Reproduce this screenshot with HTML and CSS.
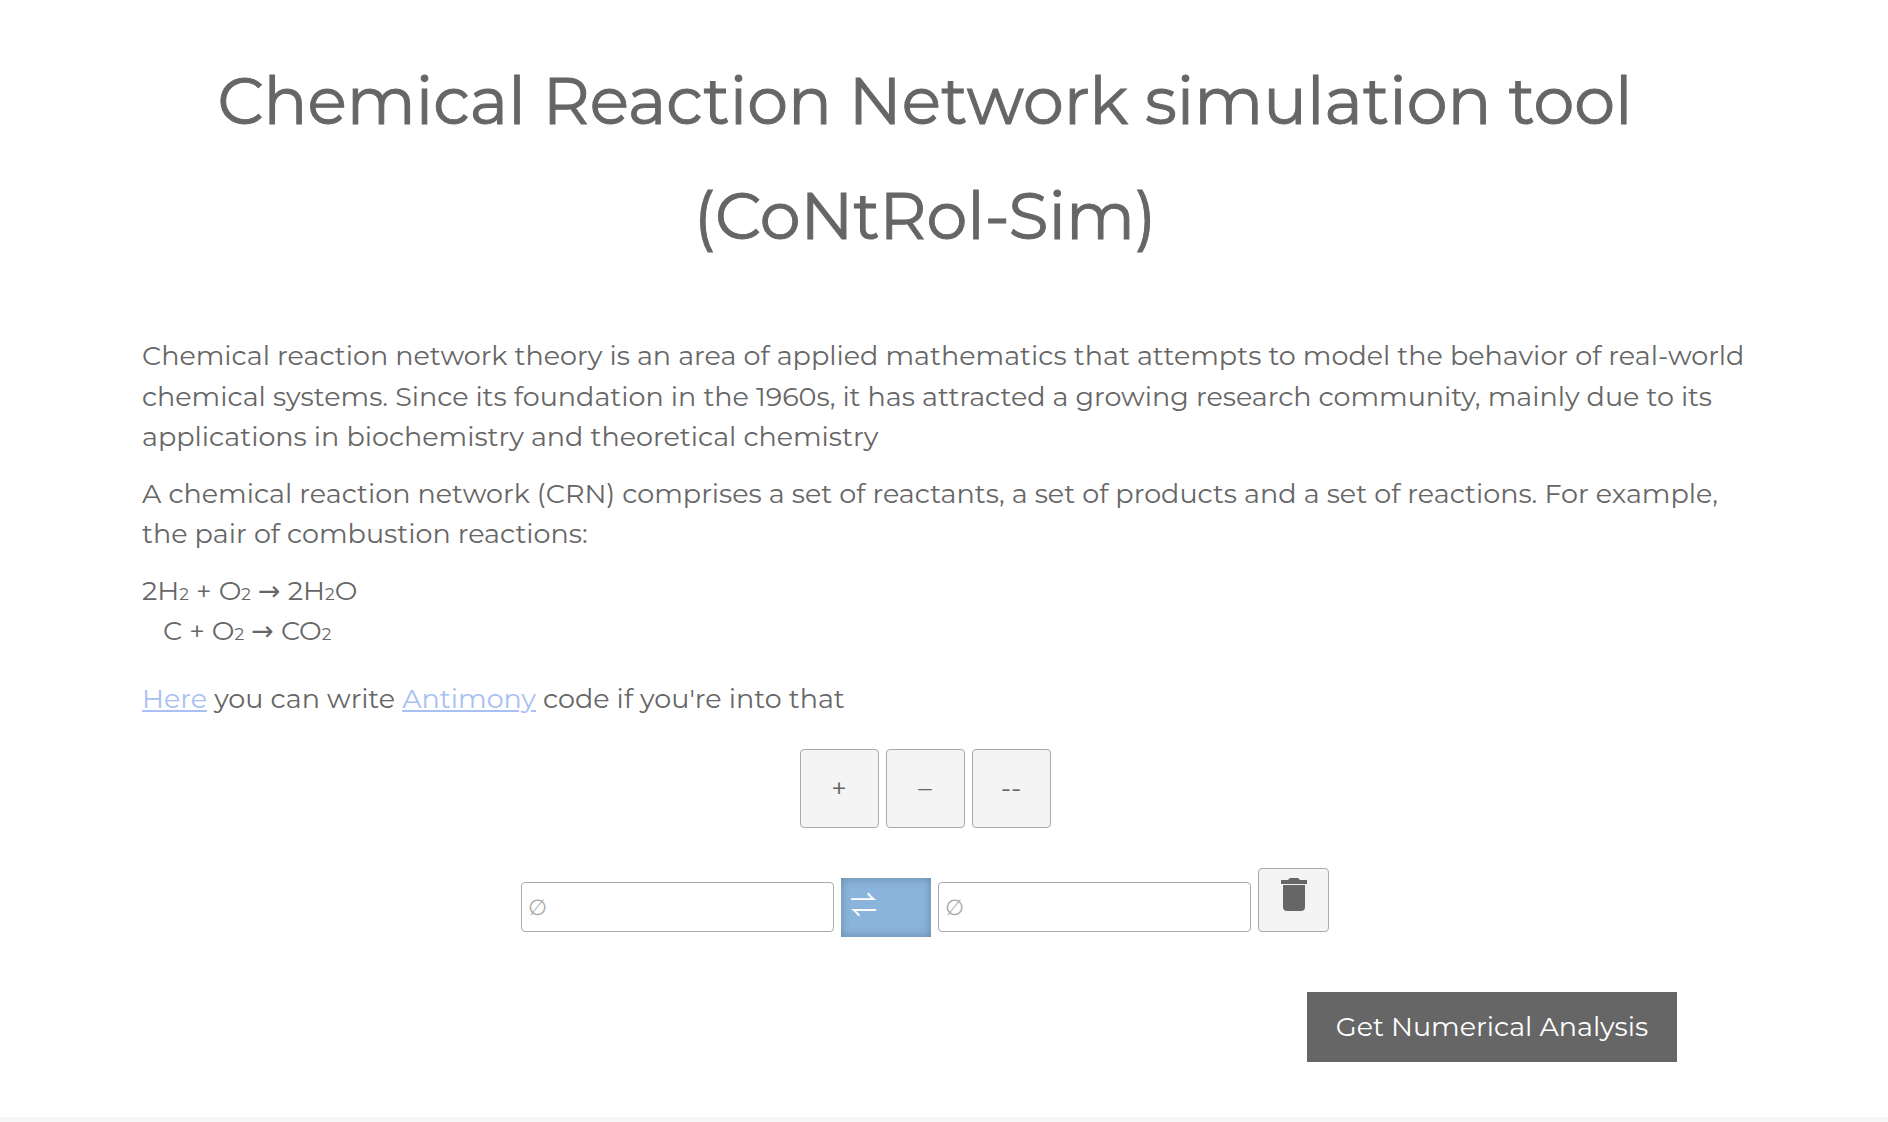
FILE: index.html
```html
<!DOCTYPE html>
<html lang="en">
<head>
<meta charset="utf-8">
<meta name="viewport" content="width=device-width, initial-scale=1">
<title>Chemical Reaction Network simulation tool</title>
<link rel="stylesheet" href="styles.css">
</head>
<body>
<main class="page">
  <h1 class="title">Chemical Reaction Network simulation tool<br>(CoNtRol-Sim)</h1>
  <section class="intro">
    <p>Chemical reaction network theory is an area of applied mathematics that attempts to model the behavior of real-world chemical systems. Since its foundation in the 1960s, it has attracted a growing research community, mainly due to its applications in biochemistry and theoretical chemistry</p>
    <p>A chemical reaction network (CRN) comprises a set of reactants, a set of products and a set of reactions. For example, the pair of combustion reactions:</p>
    <p class="equations">2H<sub>2</sub> + O<sub>2</sub> <span class="arrow">→</span> 2H<sub>2</sub>O<br><span class="indent">C + O<sub>2</sub> <span class="arrow">→</span> CO<sub>2</sub></span></p>
    <p><a href="#code">Here</a> you can write <a href="#antimony">Antimony</a> code if you're into that</p>
  </section>
  <div class="toolbar">
    <button class="tool" type="button" aria-label="Add reaction">+</button>
    <button class="tool" type="button" aria-label="Remove reaction">–</button>
    <button class="tool" type="button" aria-label="Remove all reactions">--</button>
  </div>
  <form class="network">
    <div class="reaction">
      <input class="species" type="text" placeholder="∅" aria-label="Reactants">
      <select class="direction" aria-label="Direction"><option>⇌</option><option>→</option><option>←</option></select>
      <input class="species" type="text" placeholder="∅" aria-label="Products">
      <button class="trash" type="button" aria-label="Delete reaction">
        <svg width="26" height="34" viewBox="0 0 26 34" aria-hidden="true"><path d="M0 2h7l2-2h8l2 2h7v4H0zM2 7h22v22q0 4-4 4H6q-4 0-4-4z" fill="currentColor"/></svg>
      </button>
    </div>
    <div class="actions"><button class="submit" type="button">Get Numerical Analysis</button></div>
  </form>
</main>
<footer class="footer"></footer>
</body>
</html>
```
FILE: styles.css
```css
* { box-sizing: border-box; }
body {
  margin: 0;
  background: #fff;
  color: #666;
  font: 27px/1.5 Montserrat, Inter, "DejaVu Sans", sans-serif;
}
.page { padding: 43px 38px 55px 0; }
.title {
  margin: 0 0 63px;
  font-size: 65px;
  line-height: 115px;
  font-weight: 400;
  text-align: center;
  -webkit-text-stroke: 1px #666;
}
.intro { padding: 0 96px 0 142px; }
.intro p { margin: 0 0 16px; }
.intro .equations { margin-bottom: 27px; }
.intro a { color: #a9c0f2; text-decoration-thickness: 2px; text-underline-offset: 2px; }
sub { font-size: 17px; line-height: 1; vertical-align: baseline; }
.arrow { font: 27px/1 "DejaVu Sans", sans-serif; }
.indent { padding-left: 21px; }
.toolbar { display: flex; justify-content: center; gap: 7px; margin-top: 30px; }
button, input, select { font: inherit; color: inherit; }
.tool, .trash {
  background: #f4f4f4;
  border: 1px solid #aaa;
  border-radius: 4px;
}
.tool { width: 79px; height: 79px; padding: 0 0 1px; }
.reaction { display: flex; justify-content: center; align-items: flex-end; gap: 7px; margin-top: 40px; }
.species {
  width: 313px;
  height: 50px;
  margin-bottom: 5px;
  padding: 0 6px;
  background: #fff;
  border: 1px solid #aaa;
  border-radius: 4px;
  font-family: "DejaVu Sans", sans-serif;
  font-size: 22px;
}
.species::placeholder { color: #aaa; opacity: 1; }
.direction {
  width: 90px;
  height: 59px;
  padding: 0 9px 6px;
  appearance: none;
  border: 0;
  border-radius: 0;
  background: #8ab4db;
  box-shadow: inset 0 0 10px rgba(0, 0, 0, .25);
  color: #fff;
  font-family: "Noto Sans CJK JP", sans-serif;
}
.trash { width: 71px; height: 64px; margin-bottom: 5px; padding: 9px 0 0; display: flex; justify-content: center; align-items: flex-start; }
.actions { display: flex; justify-content: flex-end; margin: 55px 173px 0 0; }
.submit { width: 370px; height: 70px; padding: 0; border: 0; background: #666; color: #fff; }
.footer { height: 5px; background: #f7f7f7; }
```
